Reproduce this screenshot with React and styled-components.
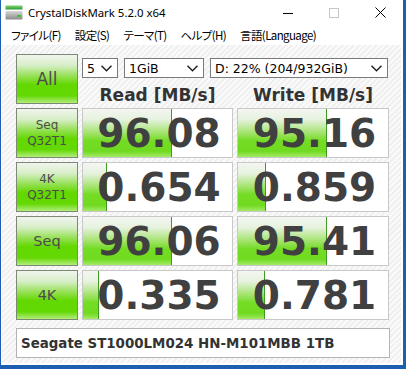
import React from "react";
import styled, { createGlobalStyle } from "styled-components";

const GlobalStyle = createGlobalStyle`
  body {
    margin: 0;
    font-family: "DejaVu Sans", Verdana, sans-serif;
  }
`;

const results = [
  { label: ["Seq", "Q32T1"], read: "96.08", write: "95.16" },
  { label: ["4K", "Q32T1"], read: "0.654", write: "0.859" },
  { label: ["Seq"], read: "96.06", write: "95.41" },
  { label: ["4K"], read: "0.335", write: "0.781" },
];

const menus = ["ファイル(F)", "設定(S)", "テーマ(T)", "ヘルプ(H)", "言語(Language)"];

// CrystalDiskMark style meter: log10(score * 10) / 5
const meter = (v) => {
  const r = Math.log10(parseFloat(v) * 10) / 5;
  return Math.max(0, Math.min(1, r)) * 100;
};

const Frame = styled.div`
  width: 406px;
  height: 369px;
  box-sizing: border-box;
  background: #1b5fae;
  padding: 0 3px 4px 1px;
  display: flex;
`;

const Window = styled.div`
  flex: 1;
  background: #ffffff;
  display: flex;
  flex-direction: column;
`;

const TitleBar = styled.div`
  height: 25px;
  display: flex;
  align-items: center;
  padding-left: 4px;
`;

const TitleText = styled.span`
  font-family: "Noto Sans", sans-serif;
  font-size: 11.4px;
  color: #000;
  margin-left: 5px;
  flex: 1;
`;

const Caption = styled.div`
  width: 46px;
  height: 25px;
  display: flex;
  align-items: center;
  justify-content: center;
`;

const MenuBar = styled.div`
  height: 20px;
  display: flex;
  align-items: center;
  gap: 14px;
  padding-left: 10px;
`;

const MenuItem = styled.span`
  font-family: "Noto Sans CJK JP", sans-serif;
  font-feature-settings: "palt";
  font-size: 11.5px;
  letter-spacing: -0.6px;
  color: #000;
`;

const Content = styled.div`
  flex: 1;
  margin: 0 2px 2px 1px;
  padding: 9px 0 0 14px;
  background: repeating-linear-gradient(
    135deg,
    #f0f0f0 0px,
    #f0f0f0 2px,
    #fafafa 2px,
    #fafafa 4px
  );
`;

const Grid = styled.div`
  display: grid;
  grid-template-columns: 62px 151px 152px;
  grid-auto-rows: 50px;
  column-gap: 4px;
  row-gap: 4px;
`;

const LabelButton = styled.div`
  box-sizing: border-box;
  border: 1px solid #7c8a74;
  background: linear-gradient(
    to bottom,
    #f2f4f0 0%,
    #d6eec6 22%,
    #92e04e 45%,
    #62d800 62%,
    #64d804 85%,
    #b2ee7c 100%
  );
  display: flex;
  flex-direction: column;
  align-items: center;
  justify-content: center;
  color: #4c4c4c;
  font-size: ${(p) => (p.$big ? "17px" : p.$single ? "14.5px" : "12px")};
  line-height: ${(p) => (p.$single ? "18px" : "16px")};
`;

const TopRight = styled.div`
  grid-column: 2 / 4;
  display: flex;
  flex-direction: column;
`;

const SelectRow = styled.div`
  display: flex;
  gap: 6px;
  margin-top: 4px;
  padding-right: 1px;
`;

const Select = styled.div`
  box-sizing: border-box;
  height: 20px;
  width: ${(p) => (p.$w ? `${p.$w}px` : "auto")};
  flex: ${(p) => (p.$w ? "none" : 1)};
  border: 1px solid #7a7a7a;
  background: #fff;
  display: flex;
  align-items: center;
  justify-content: space-between;
  padding: 0 5px 0 4px;
  font-size: 12.5px;
  color: #000;
`;

const Headers = styled.div`
  display: grid;
  grid-template-columns: 151px 152px;
  column-gap: 4px;
  margin-top: 7px;
`;

const Header = styled.div`
  text-align: center;
  font-weight: bold;
  font-size: 17px;
  line-height: 20px;
  color: #333;
`;

const ValueBox = styled.div`
  position: relative;
  box-sizing: border-box;
  border: 1px solid #c8c8c8;
  background: #fff;
  display: flex;
  align-items: center;
  justify-content: center;
  overflow: hidden;
`;

const Bar = styled.div`
  position: absolute;
  left: 0;
  top: 0;
  bottom: 0;
  box-sizing: border-box;
  border-right: 1px solid #3f9a22;
  background: linear-gradient(
    to bottom,
    #f4f6f2 0%,
    #e6f2de 22%,
    #a8e474 48%,
    #74dc24 66%,
    #70da20 88%,
    #a4ea66 100%
  );
`;

const Value = styled.span`
  position: relative;
  font-weight: bold;
  font-size: 39px;
  line-height: 1;
  color: #404040;
  padding-left: 3px;
`;

const Footer = styled.div`
  margin-top: 8px;
  box-sizing: border-box;
  width: 374px;
  height: 30px;
  border: 1px solid #b4b4b4;
  background: #fff;
  display: flex;
  align-items: center;
  padding-left: 4px;
  font-weight: bold;
  font-size: 13.4px;
  color: #333;
`;

const Chevron = () => (
  <svg width="11" height="7" viewBox="0 0 11 7">
    <polyline points="0.5,0.8 5.5,5.8 10.5,0.8" fill="none" stroke="#222" strokeWidth="1.5" />
  </svg>
);

const DiskIcon = () => (
  <svg width="18" height="15" viewBox="0 0 18 15">
    <defs>
      <linearGradient id="gtop" x1="0" y1="0" x2="0" y2="1">
        <stop offset="0" stopColor="#7fd66a" />
        <stop offset="1" stopColor="#2f9a3a" />
      </linearGradient>
      <linearGradient id="gbox" x1="0" y1="0" x2="0" y2="1">
        <stop offset="0" stopColor="#d8d8d8" />
        <stop offset="1" stopColor="#8a8a8a" />
      </linearGradient>
    </defs>
    <rect x="0.5" y="0.5" width="17" height="4" fill="url(#gtop)" />
    <rect x="0.5" y="6" width="17" height="8.5" rx="1" fill="url(#gbox)" />
    <rect x="12" y="10" width="4" height="2" fill="#3fbf3f" />
  </svg>
);

function App() {
  return (
    <Frame>
      <GlobalStyle />
      <Window>
        <TitleBar>
          <DiskIcon />
          <TitleText>CrystalDiskMark 5.2.0 x64</TitleText>
          <Caption>
            <svg width="10" height="10" viewBox="0 0 10 10">
              <line x1="0" y1="5.5" x2="10" y2="5.5" stroke="#000" strokeWidth="1" />
            </svg>
          </Caption>
          <Caption>
            <svg width="10" height="10" viewBox="0 0 10 10">
              <rect x="0.5" y="0.5" width="9" height="9" fill="none" stroke="#c8c8c8" strokeWidth="1" />
            </svg>
          </Caption>
          <Caption>
            <svg width="11" height="11" viewBox="0 0 11 11">
              <path d="M0.5 0.5 L10.5 10.5 M10.5 0.5 L0.5 10.5" stroke="#000" strokeWidth="1" />
            </svg>
          </Caption>
        </TitleBar>
        <MenuBar>
          {menus.map((m) => (
            <MenuItem key={m}>{m}</MenuItem>
          ))}
        </MenuBar>
        <Content>
          <Grid>
            <LabelButton $big>All</LabelButton>
            <TopRight>
              <SelectRow>
                <Select $w={36}>
                  <span>5</span>
                  <Chevron />
                </Select>
                <Select $w={80}>
                  <span>1GiB</span>
                  <Chevron />
                </Select>
                <Select>
                  <span>D: 22% (204/932GiB)</span>
                  <Chevron />
                </Select>
              </SelectRow>
              <Headers>
                <Header>Read [MB/s]</Header>
                <Header>Write [MB/s]</Header>
              </Headers>
            </TopRight>
            {results.map((r) => (
              <React.Fragment key={r.label.join("")}>
                <LabelButton $single={r.label.length === 1}>
                  {r.label.map((l) => (
                    <span key={l}>{l}</span>
                  ))}
                </LabelButton>
                <ValueBox>
                  <Bar style={{ width: `${meter(r.read)}%` }} />
                  <Value>{r.read}</Value>
                </ValueBox>
                <ValueBox>
                  <Bar style={{ width: `${meter(r.write)}%` }} />
                  <Value>{r.write}</Value>
                </ValueBox>
              </React.Fragment>
            ))}
          </Grid>
          <Footer>Seagate ST1000LM024 HN-M101MBB 1TB</Footer>
        </Content>
      </Window>
    </Frame>
  );
}

export default App;
